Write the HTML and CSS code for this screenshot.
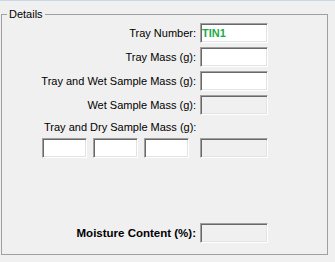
FILE: index.html
```html
<!DOCTYPE html>
<html>
   <head>
      <meta charset="utf-8">
      <title>Details</title>
      <link rel="stylesheet" href="styles.css">
   </head>
   <body>
      <div class="panel">
         <fieldset class="details">
            <legend>Details</legend>

            <!--
            Tray and wet sample
            -->
            <div class="fields">
               <label class="field-label" for="trayNumber">Tray Number:</label>
               <input type="text" id="trayNumber" class="box code" value="TIN1">

               <label class="field-label" for="trayMass">Tray Mass (g):</label>
               <input type="text" id="trayMass" class="box">

               <label class="field-label" for="wetTotal">Tray and Wet Sample Mass (g):</label>
               <input type="text" id="wetTotal" class="box">

               <label class="field-label" for="wetMass">Wet Sample Mass (g):</label>
               <input type="text" id="wetMass" class="box" disabled>
            </div>

            <!--
            Dry sample, three weighings
            -->
            <div class="dry-label">Tray and Dry Sample Mass (g):</div>
            <div class="dry-row">
               <input type="text" class="box small">
               <input type="text" class="box small">
               <input type="text" class="box small">
               <input type="text" class="box dry-total" disabled>
            </div>

            <!--
            Result
            -->
            <div class="fields result">
               <label class="field-label" for="moisture">Moisture Content (%):</label>
               <input type="text" id="moisture" class="box" disabled>
            </div>
         </fieldset>
      </div>
   </body>
</html>
```

FILE: styles.css
```css
body {
   margin : 0;
   background-color : #f0f0f0;
   font-family : "Liberation Sans", Arial, sans-serif;
   font-size : 11px;
   color : #000;
}

.panel {
   border-top : 1px solid #cbd8e8;
   padding : 7px 0 0 1px;
}

.details {
   box-sizing : border-box;
   width : 327px;
   height : 247px;
   margin : 0;
   padding : 2px 0 0 0;
   border : 1px solid #a0a0a0;
}

.details legend {
   margin-left : 5px;
   padding : 0 2px;
   line-height : 13px;
}

.fields {
   display : grid;
   grid-template-columns : 1fr 68px;
   grid-auto-rows : 20px;
   column-gap : 4px;
   row-gap : 4px;
   padding-right : 59px;
}

.field-label {
   align-self : center;
   text-align : right;
   line-height : 13px;
}

.box {
   box-sizing : border-box;
   height : 20px;
   margin : 0;
   padding : 0 1px;
   border : 1px solid;
   border-color : #a0a0a0 #fff #fff #a0a0a0;
   box-shadow : inset 1px 1px #696969, inset -1px -1px #e3e3e3;
   background-color : #fff;
   font-family : "Liberation Sans", Arial, sans-serif;
   font-size : 11px;
   outline : none;
}

.box:disabled {
   background-color : #f0f0f0;
}

.code {
   color : #1aab4a;
   font-weight : bold;
}

.dry-label {
   margin : 6px 0 0 42px;
   line-height : 13px;
}

.dry-row {
   display : flex;
   margin : 4px 0 0 40px;
}

.dry-row .small {
   width : 45px;
   margin-right : 6px;
}

.dry-row .small:nth-child(3) {
   margin-right : 11px;
}

.dry-row .dry-total {
   width : 68px;
}

.result {
   margin-top : 65px;
}

.result .field-label {
   font-weight : bold;
   font-size : 11.5px;
}
```
